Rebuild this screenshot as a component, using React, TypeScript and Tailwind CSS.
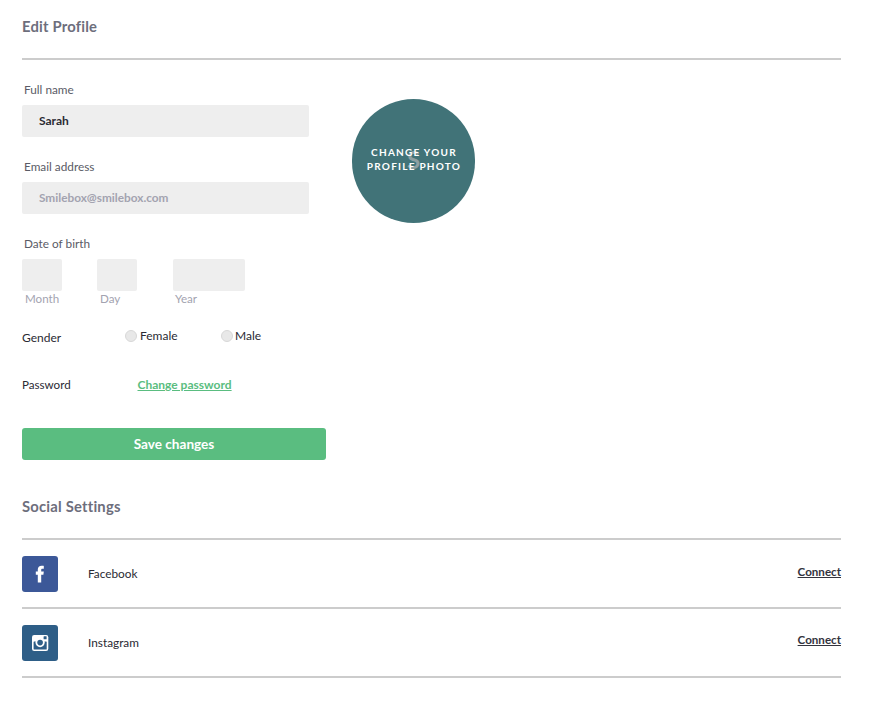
import React from "react";

function Heading({ children, className }: { children: React.ReactNode; className: string }) {
  return <h2 className={`text-[14.8px] font-bold leading-5 tracking-[0.2px] text-[#6d6e7c] ${className}`}>{children}</h2>;
}

function Rule() {
  return <div className="h-[2px] bg-[#cccccc]" />;
}

function FieldLabel({ children, className }: { children: React.ReactNode; className: string }) {
  return <div className={`pl-[2px] text-[11.8px] leading-4 text-[#5a5b66] ${className}`}>{children}</div>;
}

function Radio({ label, className, gap }: { label: string; className: string; gap: string }) {
  return (
    <div className={`flex items-center ${className}`}>
      <span className="h-[12px] w-[12px] rounded-full border border-[#d8d8d8] bg-[#e8e8e8]" />
      <span className={`${gap} text-[12px] leading-4 text-[#2a2a33]`}>{label}</span>
    </div>
  );
}

function SocialRow({ name, bg, icon, linkShift }: { name: string; bg: string; icon: React.ReactNode; linkShift: string }) {
  return (
    <div className="flex h-[67px] items-center">
      <div className={`flex h-[36px] w-[36px] shrink-0 items-center justify-center rounded-[3px] ${bg}`}>{icon}</div>
      <div className="ml-[30px] text-[11.8px] leading-4 text-[#2a2a33]">{name}</div>
      <a className={`ml-auto text-[11.6px] font-bold leading-4 text-[#33333d] underline ${linkShift}`}>Connect</a>
    </div>
  );
}

export default function App() {
  return (
    <div className="min-h-[705px] w-[871px] bg-white font-['Lato',sans-serif]">
      <div className="ml-[22px] w-[819px]">
        <Heading className="pt-[16px] pb-[22px]">Edit Profile</Heading>
        <Rule />
        <div className="flex">
          <div className="w-[304px]">
            <FieldLabel className="pt-[22px] pb-[7px]">Full name</FieldLabel>
            <div className="flex h-[32px] w-[287px] items-center rounded-[2px] bg-[#eeeeee] pl-[17px] text-[12px] font-bold text-[#2a2a33]">Sarah</div>
            <FieldLabel className="pt-[22px] pb-[7px]">Email address</FieldLabel>
            <div className="flex h-[32px] w-[287px] items-center rounded-[2px] bg-[#eeeeee] pl-[17px] text-[11.8px] font-bold text-[#a3a3b0]">Smilebox@smilebox.com</div>
            <FieldLabel className="pt-[22px] pb-[7px]">Date of birth</FieldLabel>
            <div className="flex">
              <div className="w-[75px]">
                <div className="h-[32px] w-[40px] rounded-[2px] bg-[#eeeeee]" />
                <div className="pl-[3px] text-[11.6px] leading-4 text-[#a3a3b0]">Month</div>
              </div>
              <div className="w-[76px]">
                <div className="h-[32px] w-[40px] rounded-[2px] bg-[#eeeeee]" />
                <div className="pl-[3px] text-[11.6px] leading-4 text-[#a3a3b0]">Day</div>
              </div>
              <div>
                <div className="h-[32px] w-[72px] rounded-[2px] bg-[#eeeeee]" />
                <div className="pl-[2px] text-[11.6px] leading-4 text-[#a3a3b0]">Year</div>
              </div>
            </div>
            <div className="mt-[19px] flex h-[20px] items-center">
              <div className="w-[103px] pt-[4px] text-[12px] leading-4 text-[#2a2a33]">Gender</div>
              <Radio label="Female" className="w-[96px]" gap="ml-[3px]" />
              <Radio label="Male" className="" gap="ml-[2px]" />
            </div>
            <div className="mt-[29px] flex h-[20px] items-center">
              <div className="w-[115.5px] text-[11.6px] leading-4 text-[#2a2a33]">Password</div>
              <a className="text-[12px] font-bold leading-4 text-[#5abd80] underline">Change password</a>
            </div>
            <button className="mt-[33px] h-[32px] w-[304px] rounded-[3px] bg-[#5abd80] text-[13.6px] font-bold text-white">Save changes</button>
          </div>
          <div className="relative ml-[26px] mt-[39px] flex h-[124px] w-[123px] shrink-0 items-center justify-center rounded-full bg-[#417378]">
            <span className="pb-[2px] text-[24px] font-bold leading-none text-[#8d9fa2]">S</span>
            <div className="absolute inset-0 flex flex-col items-center justify-center pb-[5px] pl-[1px] text-center text-[10px] font-bold leading-[14px] tracking-[1.25px] text-white">
              <div>CHANGE YOUR</div>
              <div>PROFILE PHOTO</div>
            </div>
          </div>
        </div>
        <Heading className="pt-[36px] pb-[22px]">Social Settings</Heading>
        <Rule />
        <SocialRow
          name="Facebook"
          bg="bg-[#3c5898]"
          linkShift="-mt-[4px]"
          icon={
            <svg width="36" height="36" viewBox="0 0 36 36" fill="#ffffff">
              <path d="M15.8 26.5V18.8h-2v-3.2h2v-2c0-2.5 1.5-3.8 3.8-3.8.9 0 1.9.1 2.2.1v2.9h-1.3c-1 0-1.3.5-1.3 1.3v1.5h2.6l-.4 3.2h-2.2v7.7z" />
            </svg>
          }
        />
        <Rule />
        <SocialRow
          name="Instagram"
          bg="bg-[#2e5e87]"
          linkShift="-mt-[6px]"
          icon={
            <svg width="36" height="36" viewBox="0 0 36 36">
              <rect x="10" y="10" width="16.3" height="16" rx="2.2" fill="#ffffff" />
              <rect x="11.6" y="16.5" width="13.1" height="8" rx="0.6" fill="#2e5e87" />
              <circle cx="18.1" cy="17.6" r="4.6" fill="#ffffff" />
              <circle cx="18.1" cy="17.6" r="2.8" fill="#2e5e87" />
              <rect x="21.6" y="11.2" width="3" height="3" rx="0.5" fill="#2e5e87" />
            </svg>
          }
        />
        <Rule />
      </div>
    </div>
  );
}
